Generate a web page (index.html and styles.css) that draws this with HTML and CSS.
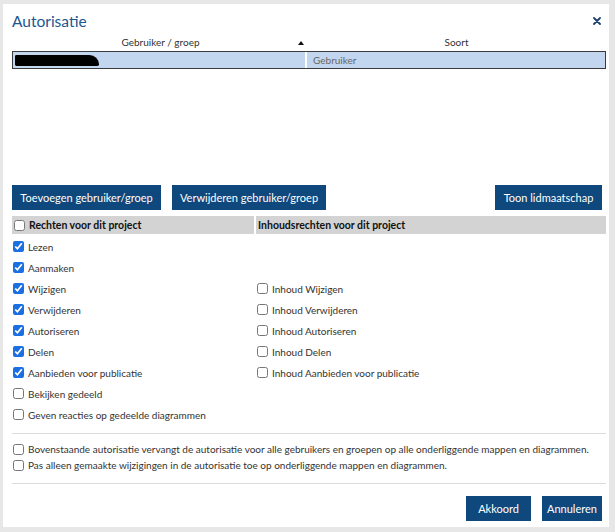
FILE: index.html
```html
<!DOCTYPE html>
<html lang="nl">
<head>
<meta charset="utf-8">
<title>Autorisatie</title>
<link rel="stylesheet" href="styles.css">
</head>
<body>
<div class="dialog">
  <div class="title-row">
    <h1 class="title">Autorisatie</h1>
    <button class="close" aria-label="Sluiten">
      <svg width="8" height="8" viewBox="0 0 8 8"><path d="M1 1 L7 7 M7 1 L1 7" stroke="#1d3f6e" stroke-width="1.8" stroke-linecap="round"/></svg>
    </button>
  </div>

  <div class="list">
    <div class="list-head">
      <div class="col col-user">Gebruiker / groep<span class="sort-up"></span></div>
      <div class="col col-kind">Soort</div>
    </div>
    <div class="list-row">
      <div class="cell cell-user"><span class="redacted"></span></div>
      <div class="cell cell-kind">Gebruiker</div>
    </div>
  </div>

  <div class="toolbar">
    <button class="btn btn-add">Toevoegen gebruiker/groep</button>
    <button class="btn btn-del">Verwijderen gebruiker/groep</button>
    <span class="spacer"></span>
    <button class="btn btn-member">Toon lidmaatschap</button>
  </div>

  <div class="rights">
    <div class="rights-head left"><label class="chk"><input type="checkbox"><b>Rechten voor dit project</b></label></div>
    <div class="rights-head right"><b>Inhoudsrechten voor dit project</b></div>

    <label class="chk row"><input type="checkbox" checked>Lezen</label><span class="row"></span>
    <label class="chk row"><input type="checkbox" checked>Aanmaken</label><span class="row"></span>
    <label class="chk row"><input type="checkbox" checked>Wijzigen</label><label class="chk row"><input type="checkbox">Inhoud Wijzigen</label>
    <label class="chk row"><input type="checkbox" checked>Verwijderen</label><label class="chk row"><input type="checkbox">Inhoud Verwijderen</label>
    <label class="chk row"><input type="checkbox" checked>Autoriseren</label><label class="chk row"><input type="checkbox">Inhoud Autoriseren</label>
    <label class="chk row"><input type="checkbox" checked>Delen</label><label class="chk row"><input type="checkbox">Inhoud Delen</label>
    <label class="chk row"><input type="checkbox" checked>Aanbieden voor publicatie</label><label class="chk row"><input type="checkbox">Inhoud Aanbieden voor publicatie</label>
    <label class="chk row"><input type="checkbox">Bekijken gedeeld</label><span class="row"></span>
    <label class="chk row"><input type="checkbox">Geven reacties op gedeelde diagrammen</label><span class="row"></span>
  </div>

  <div class="options">
    <label class="chk opt"><input type="checkbox">Bovenstaande autorisatie vervangt de autorisatie voor alle gebruikers en groepen op alle onderliggende mappen en diagrammen.</label>
    <label class="chk opt"><input type="checkbox">Pas alleen gemaakte wijzigingen in de autorisatie toe op onderliggende mappen en diagrammen.</label>
  </div>

  <div class="footer">
    <button class="btn btn-ok">Akkoord</button>
    <button class="btn btn-cancel">Annuleren</button>
  </div>
</div>
</body>
</html>
```

FILE: styles.css
```css
* { box-sizing: border-box; }
html, body { margin: 0; padding: 0; }
body {
  background: #e7e7e7;
  font-family: Lato, "Noto Sans", sans-serif;
  color: #222;
  font-size: 10px;
}
.dialog {
  margin: 4px 6px 0 3px;
  width: 606px;
  height: 523px;
  background: #fff;
  padding: 0 3px 0 9px;
  display: flex;
  flex-direction: column;
}
.title-row {
  height: 29px;
  display: flex;
  align-items: center;
  justify-content: space-between;
}
.title {
  margin: 0;
  font-size: 15.5px;
  font-weight: 400;
  color: #1b5790;
  line-height: 20px;
  padding-top: 4px;
}
.close {
  border: 0;
  background: none;
  padding: 0;
  margin: 4px 5px 0 0;
  width: 8px;
  height: 8px;
  display: flex;
}
.list {
  height: 148px;
}
.list-head {
  display: flex;
  height: 17px;
  align-items: center;
  color: #333;
}
.col { position: relative; text-align: center; }
.col-user { width: 295px; padding-left: 2px; }
.col-kind { flex: 1; }
.sort-up {
  position: absolute;
  right: 3px;
  top: 5px;
  width: 0; height: 0;
  border-left: 3px solid transparent;
  border-right: 3px solid transparent;
  border-bottom: 4px solid #111;
}
.list-row {
  margin-top: 1px;
  height: 18px;
  border: 1px solid #3b3b3b;
  background: #c3d6f0;
  display: flex;
}
.cell { height: 100%; display: flex; align-items: center; }
.cell-user { width: 294px; border-right: 2px solid #fff; padding-left: 2px; }
.cell-kind { flex: 1; padding-left: 6px; color: #666; }
.redacted {
  display: block;
  width: 84px;
  height: 11px;
  background: #000;
  border-radius: 6px 40px 6px 6px;
}
.toolbar {
  display: flex;
  gap: 11px;
  height: 25px;
  margin-top: 4px;
  padding-right: 4px;
}
.spacer { flex: 1; }
.btn {
  font-family: inherit;
  background: #0f487c;
  color: #fff;
  border: 0;
  font-size: 11px;
  height: 25px;
  padding: 0 4px;
  border-radius: 0;
  white-space: nowrap;
}
.btn-add { width: 149px; }
.btn-del { width: 154px; }
.btn-member { width: 107px; }
.rights {
  margin-top: 6px;
  display: grid;
  grid-template-columns: 242px 1fr;
  column-gap: 2px;
}
.rights-head {
  background: #d3d3d3;
  height: 18px;
  display: flex;
  align-items: center;
  padding-left: 2px;
  color: #111;
}
.rights-head b { font-weight: 700; font-size: 10.5px; }
.chk {
  display: flex;
  align-items: center;
  gap: 4px;
  white-space: nowrap;
}
.chk input {
  margin: 0;
  width: 11px;
  height: 11px;
  accent-color: #1a6fe3;
  flex: none;
}
.row {
  height: 21px;
  padding-left: 1px;
  color: #333;
}
.rights > .row:nth-child(3),
.rights > .row:nth-child(4) { margin-top: 2px; }
.options {
  margin-top: 8px;
  border-top: 1px solid #dcdcdc;
  border-bottom: 1px solid #dcdcdc;
  padding: 9px 0 12px 0;
  display: flex;
  flex-direction: column;
  gap: 4px;
}
.opt { height: 12px; padding-left: 1px; color: #333; }
.footer {
  display: flex;
  justify-content: flex-end;
  gap: 11px;
  margin-top: 12px;
  padding-right: 4px;
}
.btn-ok { width: 65px; }
.btn-cancel { width: 60px; }
```
